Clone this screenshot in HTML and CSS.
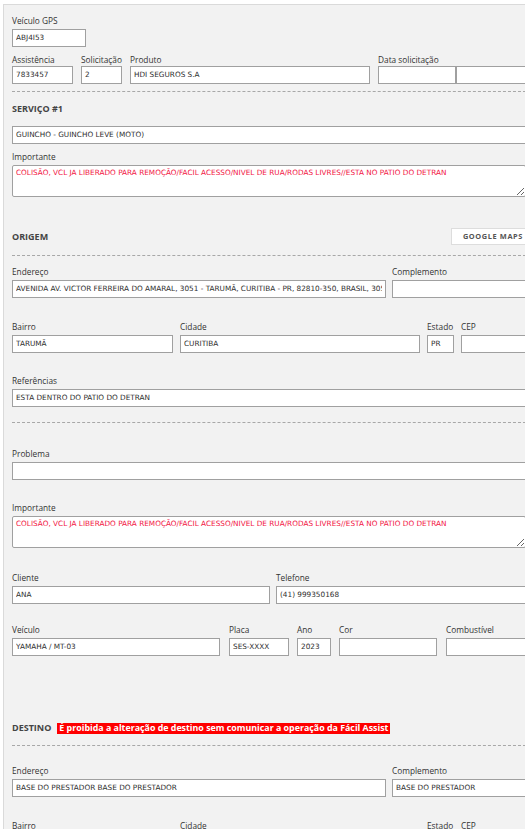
FILE: index.html
```html
<!DOCTYPE html>
<html lang="pt-BR">
<head>
<meta charset="utf-8">
<title>Serviço</title>
<link rel="stylesheet" href="styles.css">
</head>
<body>
<div class="panel">
  <div class="content">
    <div class="row r1">
      <div class="field w-gps"><label>Veículo GPS</label><input class="inp" readonly value="ABJ4I53"></div>
    </div>

    <div class="row r2 g8">
      <div class="field w-ass tight"><label>Assistência</label><input class="inp" readonly value="7833457"></div>
      <div class="field w-sol tight"><label>Solicitação</label><input class="inp" readonly value="2"></div>
      <div class="field w-prod tight"><label>Produto</label><input class="inp" readonly value="HDI SEGUROS S.A"></div>
      <div class="field grow tight">
        <label>Data solicitação</label>
        <div class="pair"><input class="inp w-data" readonly value=""><input class="inp fill" readonly value=""></div>
      </div>
    </div>

    <div class="dash d1"></div>

    <div class="heading h-serv">SERVIÇO #1</div>

    <input class="inp full m-sel" readonly value="GUINCHO - GUINCHO LEVE (MOTO)">

    <div class="field m-imp1"><label>Importante</label><textarea class="txt" readonly>COLISÃO, VCL JA LIBERADO PARA REMOÇÃO/FACIL ACESSO/NIVEL DE RUA/RODAS LIVRES//ESTA NO PATIO DO DETRAN</textarea></div>

    <div class="row head-row m-orig">
      <div class="heading">ORIGEM</div>
      <div class="gbtn">GOOGLE MAPS</div>
    </div>

    <div class="dash d2"></div>

    <div class="row g6 m-end">
      <div class="field w-end"><label>Endereço</label><input class="inp" readonly value="AVENIDA AV. VICTOR FERREIRA DO AMARAL, 3051 - TARUMÃ, CURITIBA - PR, 82810-350, BRASIL, 3051"></div>
      <div class="field grow"><label>Complemento</label><input class="inp" readonly value=""></div>
    </div>

    <div class="row g7 m-bai">
      <div class="field w-bai"><label>Bairro</label><input class="inp" readonly value="TARUMÃ"></div>
      <div class="field w-cid"><label>Cidade</label><input class="inp" readonly value="CURITIBA"></div>
      <div class="field w-est"><label>Estado</label><input class="inp" readonly value="PR"></div>
      <div class="field grow"><label>CEP</label><input class="inp" readonly value=""></div>
    </div>

    <div class="field m-ref"><label>Referências</label><input class="inp" readonly value="ESTA DENTRO DO PATIO DO DETRAN"></div>

    <div class="dash d3"></div>

    <div class="field m-prob"><label>Problema</label><input class="inp" readonly value=""></div>

    <div class="field m-imp2"><label>Importante</label><textarea class="txt" readonly>COLISÃO, VCL JA LIBERADO PARA REMOÇÃO/FACIL ACESSO/NIVEL DE RUA/RODAS LIVRES//ESTA NO PATIO DO DETRAN</textarea></div>

    <div class="row g6 m-cli">
      <div class="field w-cli"><label>Cliente</label><input class="inp" readonly value="ANA"></div>
      <div class="field grow"><label>Telefone</label><input class="inp" readonly value="(41) 999350168"></div>
    </div>

    <div class="row m-vei">
      <div class="field w-vei"><label>Veículo</label><input class="inp" readonly value="YAMAHA / MT-03"></div>
      <div class="field w-pla"><label>Placa</label><input class="inp" readonly value="SES-XXXX"></div>
      <div class="field w-ano"><label>Ano</label><input class="inp" readonly value="2023"></div>
      <div class="field w-cor"><label>Cor</label><input class="inp" readonly value=""></div>
      <div class="field grow"><label>Combustível</label><input class="inp" readonly value=""></div>
    </div>

    <div class="row head-row m-dest">
      <div class="heading">DESTINO</div>
      <div class="banner">É proibida a alteração de destino sem comunicar a operação da Fácil Assist</div>
    </div>

    <div class="dash d4"></div>

    <div class="row g6 m-end2">
      <div class="field w-end"><label>Endereço</label><input class="inp" readonly value="BASE DO PRESTADOR BASE DO PRESTADOR"></div>
      <div class="field grow"><label>Complemento</label><input class="inp" readonly value="BASE DO PRESTADOR"></div>
    </div>

    <div class="row g7 m-bai">
      <div class="field w-bai"><label>Bairro</label><input class="inp" readonly value=""></div>
      <div class="field w-cid"><label>Cidade</label><input class="inp" readonly value=""></div>
      <div class="field w-est"><label>Estado</label><input class="inp" readonly value=""></div>
      <div class="field grow"><label>CEP</label><input class="inp" readonly value=""></div>
    </div>
  </div>
</div>
</body>
</html>
```

FILE: styles.css
```css
html, body {
  margin: 0;
  padding: 0;
  background: #ffffff;
  overflow: hidden;
}

body {
  font-family: "Open Sans", "Noto Sans", sans-serif;
  color: #333333;
}

.panel {
  margin: 4px 0 0 3px;
  border-left: 1px solid #dadada;
  border-top: 1px solid #dadada;
  background: #f2f2f2;
  padding: 10px 40px 60px 8px;
  width: 514px;
}

.content {
  width: 514px;
  display: flex;
  flex-direction: column;
}

.row {
  display: flex;
  align-items: flex-start;
}

.g6 { gap: 6px; }
.g7 { gap: 7px; }
.g8 { gap: 8px; }

.field {
  display: flex;
  flex-direction: column;
  min-width: 0;
  flex: 0 0 auto;
}

.field label {
  display: block;
  font-size: 8.3px;
  line-height: 12px;
  height: 12px;
  color: #333333;
  white-space: nowrap;
  margin-bottom: 2px;
}

.field.tight label {
  margin-bottom: 0;
}

.field.grow {
  flex: 1 1 0;
  min-width: 0;
}

.inp {
  display: block;
  box-sizing: border-box;
  height: 18px;
  width: 100%;
  min-width: 0;
  margin: 0;
  border: 1px solid #a0a0a0;
  border-radius: 0;
  background: #ffffff;
  padding: 0 3px 2px 3px;
  font-family: "DejaVu Sans", sans-serif;
  font-size: 7.3px;
  color: #2e2e2e;
  outline: none;
}

.pair {
  display: flex;
  width: 100%;
}

.pair .w-data {
  width: 78px;
  flex: 0 0 78px;
}

.pair .fill {
  width: 0;
  flex: 1 1 0;
}

.txt {
  display: block;
  box-sizing: border-box;
  width: 100%;
  height: 32px;
  margin: 0;
  border: 1px solid #a0a0a0;
  border-radius: 2px;
  background: #ffffff;
  padding: 2px 3px;
  font-family: "DejaVu Sans", sans-serif;
  font-size: 7.3px;
  line-height: 9px;
  color: #f2143f;
  outline: none;
  resize: vertical;
}

.heading {
  font-size: 9px;
  font-weight: 700;
  line-height: 12px;
  height: 12px;
  color: #444444;
  white-space: nowrap;
}

.dash {
  height: 0;
  border-top: 1px dashed #a8a8a8;
}

.head-row {
  align-items: center;
}

.gbtn {
  margin-left: auto;
  margin-right: -10px;
  box-sizing: border-box;
  height: 17px;
  padding: 0 12px 0 11px;
  background: #ffffff;
  border: 1px solid #dddddd;
  font-size: 7.4px;
  font-weight: 700;
  letter-spacing: 0.6px;
  line-height: 15px;
  color: #555555;
  white-space: nowrap;
}

.banner {
  margin-left: 6px;
  background: #ff0000;
  color: #ffffff;
  font-size: 8.85px;
  font-weight: 700;
  line-height: 11px;
  height: 11px;
  padding: 0 2px;
  white-space: nowrap;
}

/* widths */
.w-gps { width: 74px; }
.w-ass { width: 61px; }
.w-sol { width: 41px; }
.w-prod { width: 240px; }
.w-end { width: 374px; }
.w-bai { width: 161px; }
.w-cid { width: 240px; }
.w-est { width: 27px; }
.w-cli { width: 258px; }
.w-vei { width: 208px; margin-right: 9px; }
.w-pla { width: 60px; margin-right: 8px; }
.w-ano { width: 34px; margin-right: 8px; }
.w-cor { width: 98px; margin-right: 9px; }

/* vertical rhythm */
.r2 { margin-top: 7px; }
.d1 { margin-top: 7px; }
.h-serv { margin-top: 11px; }
.m-sel { margin-top: 11px; }
.m-imp1 { margin-top: 7px; }
.m-orig { margin-top: 31px; }
.d2 { margin-top: 10px; }
.m-end { margin-top: 10px; }
.m-bai { margin-top: 23px; }
.m-ref { margin-top: 22px; }
.d3 { margin-top: 15px; }
.m-prob { margin-top: 25px; }
.m-imp2 { margin-top: 22px; }
.m-cli { margin-top: 24px; }
.m-vei { margin-top: 20px; }
.m-dest { margin-top: 66px; }
.d4 { margin-top: 11px; }
.m-end2 { margin-top: 19px; }
```
